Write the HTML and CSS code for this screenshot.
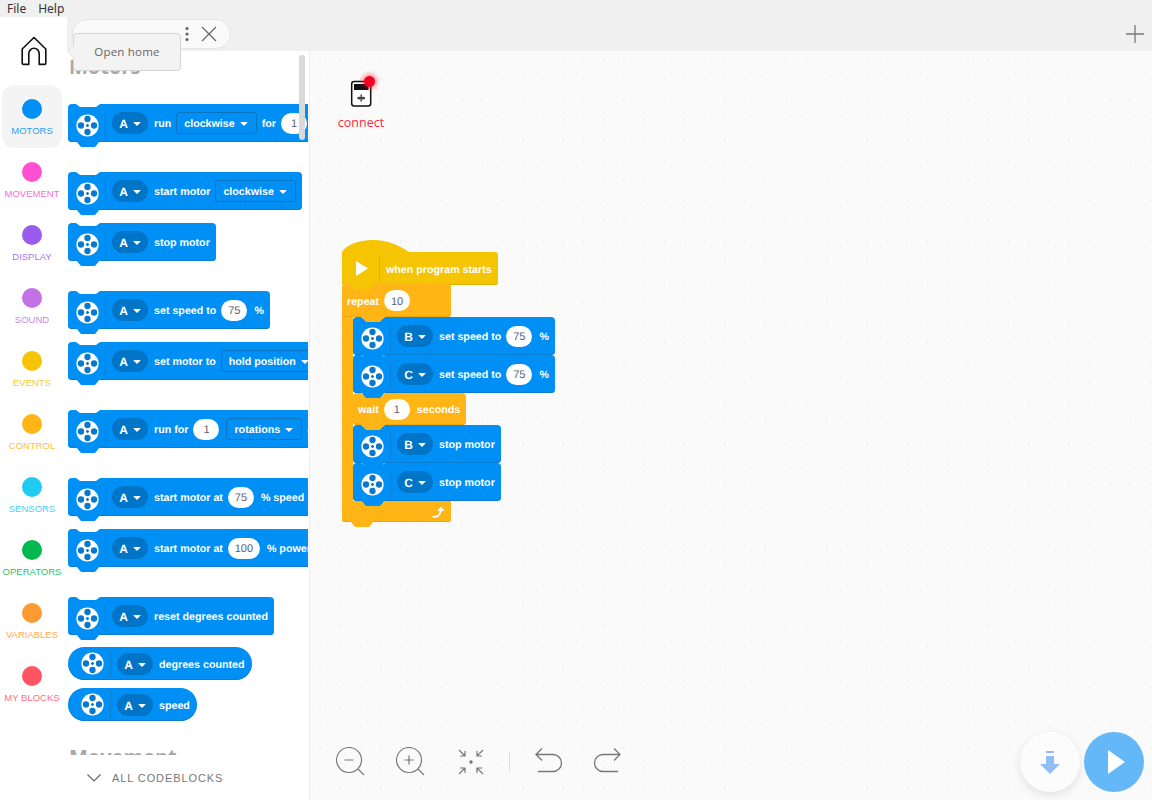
FILE: index.html
```html
<!DOCTYPE html>
<html lang="en">
<head>
<meta charset="utf-8">
<title>Word Blocks</title>
<link rel="stylesheet" href="styles.css">
</head>
<body>
<svg class="defs" width="0" height="0" aria-hidden="true">
  <symbol id="motor" viewBox="0 0 24 24">
    <circle cx="12" cy="12" r="11.6" fill="#fff"/>
    <g fill="#0a78cc">
      <circle cx="12" cy="5.2" r="3.3"/><circle cx="12" cy="18.8" r="3.3"/>
      <circle cx="5.2" cy="12" r="3.3"/><circle cx="18.8" cy="12" r="3.3"/>
      <path d="M11.3 10.4h1.4v.9h.9v1.4h-.9v.9h-1.4v-.9h-.9v-1.4h.9z"/>
    </g>
  </symbol>
</svg>

<header class="menubar"><span>File</span><span>Help</span></header>

<div class="app">
  <nav class="rail">
    <div class="home">
      <svg width="28" height="30" viewBox="0 0 28 30"><path d="M14 1.500 2.200 13v14.200a1.200 1.200 0 0 0 1.200 1.200h5.400V17.500a5.200 5.200 0 0 1 10.400 0v10.900h5.400a1.200 1.200 0 0 0 1.200-1.200V13z" fill="none" stroke="#111" stroke-width="1.600" stroke-linejoin="round"/></svg>
    </div>
    <div class="cat active c-motors"><i></i><span>MOTORS</span></div>
    <div class="cat c-movement"><i></i><span>MOVEMENT</span></div>
    <div class="cat c-display"><i></i><span>DISPLAY</span></div>
    <div class="cat c-sound"><i></i><span>SOUND</span></div>
    <div class="cat c-events"><i></i><span>EVENTS</span></div>
    <div class="cat c-control"><i></i><span>CONTROL</span></div>
    <div class="cat c-sensors"><i></i><span>SENSORS</span></div>
    <div class="cat c-operators"><i></i><span>OPERATORS</span></div>
    <div class="cat c-variables"><i></i><span>VARIABLES</span></div>
    <div class="cat c-myblocks"><i></i><span>MY BLOCKS</span></div>
  </nav>

  <div class="workspace">
    <div class="tabbar">
      <div class="tab">
        <span class="tab-name">Project</span>
        <svg class="tab-dots" width="4" height="16" viewBox="0 0 4 16"><g fill="#666"><circle cx="2" cy="2.500" r="1.600"/><circle cx="2" cy="8" r="1.600"/><circle cx="2" cy="13.500" r="1.600"/></g></svg>
        <svg class="tab-x" width="16" height="16" viewBox="0 0 16 16"><path d="M1 1l14 14M15 1 1 15" stroke="#666" stroke-width="1.200" fill="none"/></svg>
      </div>
      <svg class="tab-add" width="18" height="18" viewBox="0 0 18 18"><path d="M9 0v18M0 9h18" stroke="#777" stroke-width="1.300" fill="none"/></svg>
    </div>

    <div class="content">
      <aside class="palette">
        <div class="scroller">
          <h2 class="heading">Motors</h2>

          <div class="block first">
            <span class="icon"><svg class="motor"><use href="#motor"/></svg></span>
            <span class="pill">A<b class="caret"></b></span><span>run</span>
            <span class="drop">clockwise<b class="caret"></b></span><span>for</span>
            <span class="oval">1</span><span>rotations</span>
          </div>
          <div class="block far">
            <span class="icon"><svg class="motor"><use href="#motor"/></svg></span>
            <span class="pill">A<b class="caret"></b></span><span>start motor</span>
            <span class="drop">clockwise<b class="caret"></b></span>
          </div>
          <div class="block near">
            <span class="icon"><svg class="motor"><use href="#motor"/></svg></span>
            <span class="pill">A<b class="caret"></b></span><span>stop motor</span>
          </div>
          <div class="block far">
            <span class="icon"><svg class="motor"><use href="#motor"/></svg></span>
            <span class="pill">A<b class="caret"></b></span><span>set speed to</span>
            <span class="oval">75</span><span>%</span>
          </div>
          <div class="block near">
            <span class="icon"><svg class="motor"><use href="#motor"/></svg></span>
            <span class="pill">A<b class="caret"></b></span><span>set motor to</span>
            <span class="drop">hold position<b class="caret"></b></span>
          </div>
          <div class="block far">
            <span class="icon"><svg class="motor"><use href="#motor"/></svg></span>
            <span class="pill">A<b class="caret"></b></span><span>run for</span>
            <span class="oval">1</span>
            <span class="drop">rotations<b class="caret"></b></span><span>at</span>
          </div>
          <div class="block far">
            <span class="icon"><svg class="motor"><use href="#motor"/></svg></span>
            <span class="pill">A<b class="caret"></b></span><span>start motor at</span>
            <span class="oval">75</span><span>% speed</span>
          </div>
          <div class="block near">
            <span class="icon"><svg class="motor"><use href="#motor"/></svg></span>
            <span class="pill">A<b class="caret"></b></span><span>start motor at</span>
            <span class="oval wide">100</span><span>% power</span>
          </div>
          <div class="block far">
            <span class="icon"><svg class="motor"><use href="#motor"/></svg></span>
            <span class="pill">A<b class="caret"></b></span><span>reset degrees counted</span>
          </div>
          <div class="block round r1">
            <span class="icon"><svg class="motor"><use href="#motor"/></svg></span>
            <span class="pill">A<b class="caret"></b></span><span>degrees counted</span>
          </div>
          <div class="block round r2">
            <span class="icon"><svg class="motor"><use href="#motor"/></svg></span>
            <span class="pill">A<b class="caret"></b></span><span>speed</span>
          </div>

          <h2 class="heading next">Movement</h2>
        </div>
        <div class="scrollbar"></div>
        <div class="all">
          <svg width="14" height="8" viewBox="0 0 14 8"><path d="M.5.5 7 7 13.500.5" fill="none" stroke="#666" stroke-width="1.200"/></svg>
          <span>ALL CODEBLOCKS</span>
        </div>
      </aside>

      <main class="canvas">
        <div class="hub">
          <svg width="24" height="30" viewBox="0 0 24 30">
            <rect x="2.700" y="3.500" width="19" height="24.500" rx="2.500" fill="#fff" stroke="#111" stroke-width="1.500"/>
            <rect x="5" y="6" width="14.500" height="6" fill="#111"/>
            <ellipse cx="12.200" cy="20" rx="4" ry="1.500" fill="#444"/>
            <path d="M12.200 16.500v2M12.200 21.500v2" stroke="#444" stroke-width="1.500" fill="none"/>
          </svg>
          <i class="led"></i>
          <span>connect</span>
        </div>

        <div class="script">
          <div class="block hat">
            <span class="icon">
              <svg width="12" height="15" viewBox="0 0 12 15"><path d="M0 0 12 7.500 0 15z" fill="#fff"/></svg>
            </span>
            <span>when program starts</span>
          </div>
          <div class="cblock">
            <div class="block orange chead"><span>repeat</span><span class="oval">10</span></div>
            <div class="carm">
              <div class="block stacked">
                <span class="icon"><svg class="motor"><use href="#motor"/></svg></span>
                <span class="pill">B<b class="caret"></b></span><span>set speed to</span>
                <span class="oval">75</span><span>%</span>
              </div>
              <div class="block stacked">
                <span class="icon"><svg class="motor"><use href="#motor"/></svg></span>
                <span class="pill">C<b class="caret"></b></span><span>set speed to</span>
                <span class="oval">75</span><span>%</span>
              </div>
              <div class="block orange wait"><span>wait</span><span class="oval">1</span><span>seconds</span></div>
              <div class="block stacked">
                <span class="icon"><svg class="motor"><use href="#motor"/></svg></span>
                <span class="pill">B<b class="caret"></b></span><span>stop motor</span>
              </div>
              <div class="block stacked">
                <span class="icon"><svg class="motor"><use href="#motor"/></svg></span>
                <span class="pill">C<b class="caret"></b></span><span>stop motor</span>
              </div>
            </div>
            <div class="block orange cfoot">
              <svg width="13" height="12" viewBox="0 0 13 12"><path d="M.5 10.500c4 1 7.500-.5 8.500-6" fill="none" stroke="#fff" stroke-width="1.800"/><path d="M5.500 5 9 .5 12.500 5z" fill="#fff"/></svg>
            </div>
          </div>
        </div>

        <div class="tools">
          <svg width="30" height="30" viewBox="0 0 30 30"><g fill="none" stroke="#777" stroke-width="1.200"><circle cx="13" cy="13" r="12.500"/><path d="M8.500 13h9M22 22l6 6"/></g></svg>
          <svg width="30" height="30" viewBox="0 0 30 30"><g fill="none" stroke="#777" stroke-width="1.200"><circle cx="13" cy="13" r="12.500"/><path d="M8.500 13h9M13 8.500v9M22 22l6 6"/></g></svg>
          <svg width="30" height="30" viewBox="0 0 30 30"><g fill="none" stroke="#777" stroke-width="1.200"><path d="M3 3l6 6M9 4v5H4M27 3l-6 6M21 4v5h5M3 27l6-6M9 26v-5H4M27 27l-6-6M21 26v-5h5"/></g><circle cx="15" cy="15" r="1.700" fill="#777"/></svg>
          <i class="sep"></i>
          <svg width="30" height="30" viewBox="0 0 30 30"><g fill="none" stroke="#777" stroke-width="1.300"><path d="M4 7.500h16a8 8 0 0 1 0 17H5M9 1.500 3 7.500l6 6"/></g></svg>
          <svg width="30" height="30" viewBox="0 0 30 30"><g fill="none" stroke="#777" stroke-width="1.300"><path d="M26 7.500H10a8 8 0 0 0 0 17h15M21 1.500l6 6-6 6"/></g></svg>
        </div>

        <div class="fabs">
          <div class="fab dl">
            <svg width="20" height="24" viewBox="0 0 20 24"><path d="M6 1h8v2H6zM6 6h8v8h6L10 24 0 14h6z" fill="#93bdf5"/></svg>
          </div>
          <div class="fab run">
            <svg width="17" height="24" viewBox="0 0 17 24"><path d="M0 0 17 12 0 24z" fill="#fff"/></svg>
          </div>
        </div>
      </main>
    </div>
  </div>
</div>

<div class="tooltip">Open home</div>
</body>
</html>
```

FILE: styles.css
```css
* { box-sizing: border-box; }
html, body { height: 100%; }
body {
  margin: 0;
  width: 1152px;
  height: 800px;
  overflow: hidden;
  position: relative;
  display: flex;
  flex-direction: column;
  background: #fff;
  font-family: "Open Sans", "Liberation Sans", sans-serif;
}
.defs { position: absolute; }

.menubar {
  flex: none;
  height: 17px;
  background: #f0f0f0;
  display: flex;
  gap: 12px;
  padding-left: 7px;
  font: 12px/17px "Noto Sans", "Open Sans", sans-serif;
  color: #333;
}

.app { flex: 1; min-height: 0; display: flex; }

.rail { flex: none; width: 67px; background: #fff; padding-left: 2px; }
.home { height: 68px; padding: 19px 0 0 18px; }
.cat {
  width: 60px;
  height: 63px;
  padding-top: 14px;
  display: flex;
  flex-direction: column;
  align-items: center;
  border-radius: 12px;
  color: var(--c);
  font: 9.5px/12px "Liberation Sans", Arial, sans-serif;
}
.cat i { width: 20px; height: 20px; border-radius: 50%; background: var(--c); margin-bottom: 6px; }
.cat span { white-space: nowrap; opacity: .85; }
.cat.active { background: #f4f4f4; }
.c-motors { --c: #0090f5; }
.c-movement { --c: #ff4fd2; }
.c-display { --c: #9a5cf0; }
.c-sound { --c: #c272e5; }
.c-events { --c: #f5c402; }
.c-control { --c: #ffb515; }
.c-sensors { --c: #1fcbf0; }
.c-operators { --c: #00b84f; }
.c-variables { --c: #ff9a30; }
.c-myblocks { --c: #ff5563; }

.workspace { flex: 1; min-width: 0; display: flex; flex-direction: column; }
.tabbar {
  flex: none;
  height: 34px;
  background: #f0f0f0;
  display: flex;
  align-items: flex-start;
  justify-content: space-between;
  padding: 2px 8px 0 5px;
}
.tab {
  width: 159px;
  height: 30px;
  background: #fafafa;
  border: 1px solid #e4e4e4;
  border-radius: 15px;
  display: flex;
  align-items: center;
  padding-left: 35px;
  font-size: 13px;
  color: #222;
}
.tab-name { width: 77px; padding-top: 5px; }
.tab-x { margin-left: 12px; }
.tab-add { margin-top: 6px; }

.content { flex: 1; min-height: 0; display: flex; }

.palette {
  flex: none;
  width: 243px;
  position: relative;
  display: flex;
  flex-direction: column;
  border-right: 1px solid #eee;
}
.scroller {
  flex: 1;
  min-height: 0;
  width: 241px;
  overflow: hidden;
  padding-left: 1px;
  display: flex;
  flex-direction: column;
  align-items: flex-start;
}
.heading {
  flex: none;
  margin: 0 0 0 1px;
  height: 27px;
  font-size: 20px;
  line-height: 27px;
  font-weight: 700;
  color: #a8a8a8;
  padding-top: 2px;
  box-sizing: content-box;
}
.heading.next { margin-top: 20px; }
.scrollbar {
  position: absolute;
  left: 232px;
  top: 4px;
  width: 6px;
  height: 85px;
  border-radius: 3px;
  background: #d9d9d9;
}
.all {
  flex: none;
  height: 45px;
  padding: 0 0 0 20px;
  display: flex;
  align-items: center;
  gap: 11px;
  font: 11px/14px "Liberation Sans", Arial, sans-serif;
  letter-spacing: .9px;
  color: #777;
  background: #fff;
}

.block {
  --bg: #0090f5;
  --edge: #0a7fd2;
  position: relative;
  flex: none;
  display: inline-flex;
  align-items: center;
  gap: 5px;
  height: 38px;
  padding: 0 6px 0 8px;
  background: var(--bg);
  border-radius: 4px;
  box-shadow: inset 0 -1px 0 var(--edge);
  color: #fff;
  font-family: "Liberation Sans", Arial, sans-serif;
  font-size: 10.7px;
  font-weight: 700;
  text-rendering: geometricPrecision;
  white-space: nowrap;
}
.block > span:not(.icon) { padding-top: 2px; }
.block::before, .block::after {
  content: "";
  position: absolute;
  left: 8px;
  width: 24px;
}
.block::before {
  top: 0;
  height: 3px;
  background: #fff;
  clip-path: polygon(0 0, 100% 0, calc(100% - 4px) 100%, 4px 100%);
  z-index: 1;
}
.block::after {
  top: 100%;
  height: 6px;
  margin-top: -1px;
  background: var(--bg);
  clip-path: polygon(0 0, 100% 0, calc(100% - 5px) 100%, 5px 100%);
  z-index: 2;
}
.first { margin-top: 24px; }
.far { margin-top: 30px; }
.near { margin-top: 13px; }

.icon {
  flex: none;
  display: flex;
  align-items: center;
  height: 26px;
  margin-top: 3px;
  padding-right: 6px;
  margin-right: 1px;
  border-right: 1px solid var(--edge);
}
.motor { display: block; width: 23px; height: 23px; margin-top: 2px; }
.round .icon { margin-top: 0; }
.round .motor { margin-top: 0; }

.block > .pill {
  flex: none;
  display: flex;
  align-items: center;
  justify-content: center;
  gap: 5px;
  width: 36px;
  height: 22px;
  margin-right: 1px;
  padding-top: 0;
  border-radius: 11px;
  background: #0074c6;
  font-size: 12px;
  font-weight: 700;
}
.caret {
  width: 0;
  height: 0;
  border-left: 4px solid transparent;
  border-right: 4px solid transparent;
  border-top: 4px solid #fff;
  border-radius: 1px;
}
.drop {
  flex: none;
  display: flex;
  align-items: center;
  gap: 5px;
  height: 22px;
  padding: 0 8px 0 7px;
  border: 1px solid #0a74c0;
  border-radius: 3px;
}
.oval {
  flex: none;
  display: flex;
  align-items: center;
  justify-content: center;
  width: 26px;
  height: 21px;
  margin: 0 2px 0 0;
  border-radius: 11px;
  background: #fff;
  color: #575e75;
  font-weight: 400;
  font-size: 11px;
}
.oval.wide { width: 32px; }

.round { height: 33px; border-radius: 17px; padding: 0 7px 0 13px; }
.round::before, .round::after { display: none; }
.r1 { margin-top: 12px; }
.r2 { margin-top: 8px; }

.canvas {
  flex: 1;
  min-width: 0;
  position: relative;
  overflow: hidden;
  background-color: #fafafa;
  background-image: radial-gradient(circle, #e2e2e2 .8px, transparent 1px);
  background-size: 20.25px 20.25px;
  background-position: 0 -2px;
}

.hub {
  position: absolute;
  left: 26px;
  top: 27px;
  width: 50px;
  display: flex;
  flex-direction: column;
  align-items: center;
  gap: 7px;
  color: #ff1f3d;
  font-size: 12.5px;
  line-height: 16px;
}
.led {
  position: absolute;
  left: 28px;
  top: -2px;
  width: 11px;
  height: 11px;
  border-radius: 50%;
  background: #f5001e;
  box-shadow: 0 0 4px 2px rgba(245, 0, 30, .45);
}

.script {
  position: absolute;
  left: 32px;
  top: 201px;
  display: flex;
  flex-direction: column;
  align-items: flex-start;
}
.hat {
  --bg: #f5c402;
  --edge: #e0b200;
  height: 33px;
  width: 156px;
  padding-left: 0;
  gap: 6px;
  border-radius: 0 3px 3px 3px;
}
.hat::before {
  top: auto;
  bottom: 100%;
  left: 0;
  width: 67px;
  height: 12px;
  background: var(--bg);
  clip-path: path("M0 12C4 5 16 0 31 0 45 0 57 5 67 12Z");
}
.hat .icon { width: 38px; height: 26px; padding: 0 0 0 14px; margin: 0; }
.cblock { display: flex; flex-direction: column; align-items: flex-start; margin-top: -1px; }
.orange { --bg: #ffb515; --edge: #eea60a; }
.chead { width: 109px; height: 33px; padding-left: 5px; border-radius: 3px 3px 3px 0; gap: 5px; }
.chead::after { left: 19px; }
.carm {
  display: flex;
  flex-direction: column;
  align-items: flex-start;
  border-left: 11px solid #ffb515;
}
.stacked { margin: 0; }
.wait { height: 32px; padding-left: 5px; gap: 5px; }
.cfoot {
  width: 109px;
  height: 21px;
  justify-content: flex-end;
  padding-right: 6px;
  border-radius: 0 0 3px 3px;
}
.cfoot svg { display: block; }
.cfoot::before { display: none; }

.tools {
  position: absolute;
  left: 26px;
  bottom: 23px;
  display: flex;
  align-items: center;
  gap: 30px;
}
.tools svg { display: block; }
.sep { width: 1px; height: 20px; margin: 0 -7px 0 -7px; background: #ddd; }

.fabs {
  position: absolute;
  right: 8px;
  bottom: 8px;
  display: flex;
  gap: 4px;
}
.fab {
  width: 60px;
  height: 60px;
  border-radius: 50%;
  display: flex;
  align-items: center;
  justify-content: center;
}
.dl { background: #fcfcfc; box-shadow: 0 3px 10px rgba(0, 0, 0, .1); }
.run { background: #64b8f8; padding-left: 5px; }

.tooltip {
  position: absolute;
  left: 73px;
  top: 33px;
  width: 108px;
  height: 38px;
  background: #f3f3f3;
  border: 1px solid #d4d4d4;
  border-radius: 4px;
  font-size: 11.500px;
  line-height: 36px;
  text-align: center;
  color: #666;
  letter-spacing: .2px;
  z-index: 5;
}
.tooltip::before {
  content: "";
  position: absolute;
  left: -5px;
  top: 13px;
  width: 8px;
  height: 8px;
  background: #f3f3f3;
  border-left: 1px solid #e4e4e4;
  border-bottom: 1px solid #e4e4e4;
  transform: rotate(45deg);
}
```
